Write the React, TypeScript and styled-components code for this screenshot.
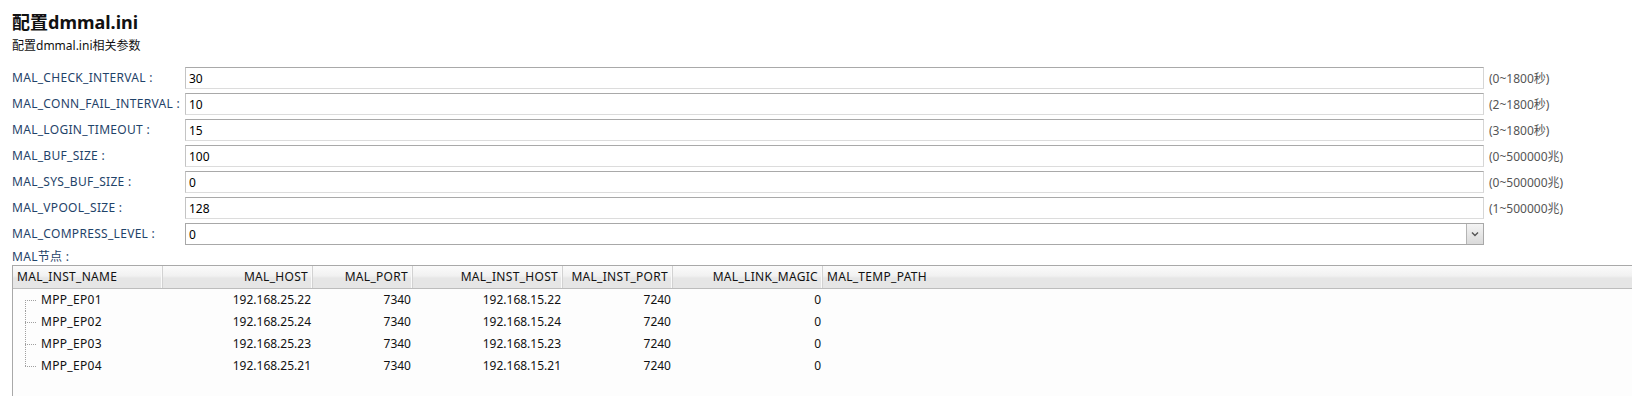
import React from 'react';
import styled, { createGlobalStyle } from 'styled-components';

const GlobalStyle = createGlobalStyle`
    html, body {
        margin: 0;
        padding: 0;
        background: #ffffff;
    }
    body {
        font-family: "Noto Sans", "Noto Sans CJK SC", sans-serif;
        font-size: 12px;
        color: #000;
        overflow: hidden;
    }
`

const Page = styled.div`
    padding: 10px 0 0 12px;
`

const Title = styled.h2`
    margin: 0;
    font-size: 18px;
    line-height: 24px;
    font-weight: bold;
    color: #111;
`

const SubTitle = styled.div`
    margin-top: 2px;
    font-size: 12px;
    line-height: 20px;
    color: #111;
`

const Form = styled.div`
    margin-top: 11px;
    display: flex;
    flex-direction: column;
    gap: 4px;
`

const Row = styled.div`
    display: grid;
    grid-template-columns: 173px 1fr 148px;
    align-items: center;
    height: 22px;
`

const Label = styled.label`
    color: #1f4369;
    white-space: nowrap;
    line-height: 22px;
    letter-spacing: 0.3px;
`

const TextInput = styled.input`
    box-sizing: border-box;
    width: 100%;
    height: 22px;
    margin: 0;
    padding: 0 3px;
    font: inherit;
    font-size: 12px;
    color: #000;
    background: #fff;
    border: 1px solid;
    border-color: #a9a9a9 #d6d6d6 #dcdcdc #c4c4c4;
    outline: none;
`

const SelectBox = styled.div`
    box-sizing: border-box;
    height: 22px;
    display: flex;
    align-items: center;
    justify-content: space-between;
    border: 1px solid #a8a8a8;
    background: #fff;
    padding-left: 3px;
`

const ArrowButton = styled.span`
    box-sizing: border-box;
    width: 17px;
    height: 20px;
    display: flex;
    align-items: center;
    justify-content: center;
    border-left: 1px solid #b4b4b4;
    background: linear-gradient(#f4f4f4, #dadada);
`

const Hint = styled.span`
    padding-left: 5px;
    color: #555;
    white-space: nowrap;
`

const NodeLabel = styled.div`
    margin-top: 4px;
    line-height: 16px;
    color: #1f4369;
    letter-spacing: 0.3px;
`

const Grid = styled.div`
    border-top: 1px solid #a9a9a9;
    border-left: 1px solid #a9a9a9;
    background: #fdfdfd;
`

const columns = '150px 150px 100px 150px 110px 150px 1fr';

const HeaderRow = styled.div`
    display: grid;
    grid-template-columns: ${columns};
    height: 22px;
    border-bottom: 1px solid #bdbdbd;
    background: linear-gradient(#fbfbfb 0%, #f1f1f1 45%, #e6e6e6 55%, #e6e6e6 100%);
`

const HeaderCell = styled.div<{ $right?: boolean; $last?: boolean }>`
    box-sizing: border-box;
    padding: 0 4px;
    line-height: 22px;
    letter-spacing: 0.3px;
    text-align: ${p => p.$right ? 'right' : 'left'};
    border-right: ${p => p.$last ? 'none' : '1px solid #d2d2d2'};
    box-shadow: ${p => p.$last ? 'none' : 'inset -1px 0 0 #fafafa'};
    white-space: nowrap;
    overflow: hidden;
    color: #111;
`

const Body = styled.div`
    min-height: 130px;
`

const DataRow = styled.div`
    display: grid;
    grid-template-columns: ${columns};
    height: 22px;
`

const Cell = styled.div<{ $right?: boolean }>`
    box-sizing: border-box;
    padding: 0 2px;
    line-height: 22px;
    text-align: ${p => p.$right ? 'right' : 'left'};
    white-space: nowrap;
    color: #111;
`

const TreeCell = styled.div`
    display: flex;
    align-items: center;
    padding-left: 12px;
    line-height: 22px;
    letter-spacing: 0.3px;
    color: #111;
`

const Guide = ({ first, last }: { first: boolean; last: boolean }) => (
    <svg width="16" height="22" style={{ flexShrink: 0 }}>
        <line x1="0.5" y1={first ? 11 : 0} x2="0.5" y2={last ? 11.5 : 22} stroke="#a0a0a0" strokeDasharray="1 1" />
        <line x1="0" y1="11.5" x2="11" y2="11.5" stroke="#a0a0a0" strokeDasharray="1 1" />
    </svg>
)

const fields = [
    { name: 'MAL_CHECK_INTERVAL', value: '30', hint: '(0~1800秒)' },
    { name: 'MAL_CONN_FAIL_INTERVAL', value: '10', hint: '(2~1800秒)' },
    { name: 'MAL_LOGIN_TIMEOUT', value: '15', hint: '(3~1800秒)' },
    { name: 'MAL_BUF_SIZE', value: '100', hint: '(0~500000兆)' },
    { name: 'MAL_SYS_BUF_SIZE', value: '0', hint: '(0~500000兆)' },
    { name: 'MAL_VPOOL_SIZE', value: '128', hint: '(1~500000兆)' },
];

const headers = [
    { title: 'MAL_INST_NAME', right: false },
    { title: 'MAL_HOST', right: true },
    { title: 'MAL_PORT', right: true },
    { title: 'MAL_INST_HOST', right: true },
    { title: 'MAL_INST_PORT', right: true },
    { title: 'MAL_LINK_MAGIC', right: true },
    { title: 'MAL_TEMP_PATH', right: false },
];

const nodes = [
    { name: 'MPP_EP01', host: '192.168.25.22', port: '7340', instHost: '192.168.15.22', instPort: '7240', magic: '0' },
    { name: 'MPP_EP02', host: '192.168.25.24', port: '7340', instHost: '192.168.15.24', instPort: '7240', magic: '0' },
    { name: 'MPP_EP03', host: '192.168.25.23', port: '7340', instHost: '192.168.15.23', instPort: '7240', magic: '0' },
    { name: 'MPP_EP04', host: '192.168.25.21', port: '7340', instHost: '192.168.15.21', instPort: '7240', magic: '0' },
];

const App: React.FC = () => {
    return (
        <Page>
            <GlobalStyle />
            <Title>配置dmmal.ini</Title>
            <SubTitle>配置dmmal.ini相关参数</SubTitle>
            <Form>
                {fields.map(f => (
                    <Row key={f.name}>
                        <Label>{f.name} :</Label>
                        <TextInput value={f.value} readOnly />
                        <Hint>{f.hint}</Hint>
                    </Row>
                ))}
                <Row>
                    <Label>MAL_COMPRESS_LEVEL :</Label>
                    <SelectBox>
                        <span>0</span>
                        <ArrowButton>
                            <svg width="8" height="6" viewBox="0 0 8 6">
                                <path d="M1 1.5 L4 4.5 L7 1.5" fill="none" stroke="#555" strokeWidth="1.4" />
                            </svg>
                        </ArrowButton>
                    </SelectBox>
                    <span />
                </Row>
            </Form>
            <NodeLabel>MAL节点 :</NodeLabel>
            <Grid>
                <HeaderRow>
                    {headers.map((h, i) => (
                        <HeaderCell key={h.title} $right={h.right} $last={i === headers.length - 1}>{h.title}</HeaderCell>
                    ))}
                </HeaderRow>
                <Body>
                    {nodes.map((n, i) => (
                        <DataRow key={n.name}>
                            <TreeCell>
                                <Guide first={i === 0} last={i === nodes.length - 1} />
                                {n.name}
                            </TreeCell>
                            <Cell $right>{n.host}</Cell>
                            <Cell $right>{n.port}</Cell>
                            <Cell $right>{n.instHost}</Cell>
                            <Cell $right>{n.instPort}</Cell>
                            <Cell $right>{n.magic}</Cell>
                            <Cell />
                        </DataRow>
                    ))}
                </Body>
            </Grid>
        </Page>
    );
}

export default App;
